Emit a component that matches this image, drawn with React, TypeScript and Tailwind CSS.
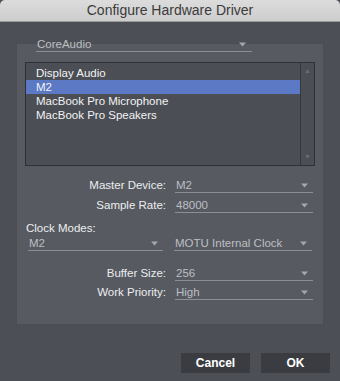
import React from 'react';

const font = { fontFamily: '"Liberation Sans", Arial, sans-serif' };

const Arrow = () => (
  <svg width="7" height="5" viewBox="0 0 7 5" className="shrink-0">
    <path d="M0 0.5 L7 0.5 L3.5 4.5 Z" fill="#a3a6ab" />
  </svg>
);

type SelectProps = { value: string; className?: string; arrowPad?: string };

const Select = ({ value, className = '', arrowPad = 'pr-[5px]' }: SelectProps) => (
  <div
    className={`flex h-[15px] items-center justify-between border-b border-[#8b8e93] ${arrowPad} ${className}`}
  >
    <span className="pl-[1px] text-[11.5px] leading-[14px] text-[#bcbfc3]">{value}</span>
    <Arrow />
  </div>
);

const Field = ({ label, value, className = '' }: { label: string; value: string; className?: string }) => (
  <div className={`flex items-end ${className}`}>
    <span className="w-[150px] pb-[1px] pr-[1px] text-right text-[11.5px] leading-[14px] text-[#eceef0]">
      {label}
    </span>
    <Select value={value} className="ml-[8px] w-[138px]" />
  </div>
);

const devices = ['Display Audio', 'M2', 'MacBook Pro Microphone', 'MacBook Pro Speakers'];

export default function App() {
  return (
    <div className="h-[381px] w-[340px] overflow-hidden bg-[#4c4f55]" style={font}>
      <div className="flex h-[22px] items-center justify-center rounded-t-[5px] border-b border-[#9a9a9a] bg-gradient-to-b from-[#dcdcdc] to-[#cdcdcd]">
        <span className="text-[14px] text-[#3b3b3b]">Configure Hardware Driver</span>
      </div>

      <div className="px-[16px] pt-[21px]">
        <div className="w-[308px] border border-[#4a4d52] bg-[#575a60] pb-[24px]">
          <Select value="CoreAudio" className="-mt-[7px] ml-[19px] w-[216px]" arrowPad="pr-[6px]" />

          <div className="ml-[8px] mt-[10px] flex h-[104px] w-[290px] border border-[#2f3136] bg-[#4b4e54]">
            <div className="flex-1 pt-[3px]">
              {devices.map((d) => (
                <div
                  key={d}
                  className={`h-[14px] pl-[10px] text-[11.5px] leading-[15px] text-[#f2f3f5] ${
                    d === 'M2' ? 'bg-[#5b79c4]' : ''
                  }`}
                >
                  {d}
                </div>
              ))}
            </div>
            <div className="flex w-[14px] flex-col items-center justify-between border-l border-[#35373c] py-[4px]">
              <span className="text-[7px] leading-[8px] text-[#6a6d72]">▲</span>
              <span className="text-[7px] leading-[8px] text-[#6a6d72]">▼</span>
            </div>
          </div>

          <Field label="Master Device:" value="M2" className="mt-[12px]" />
          <Field label="Sample Rate:" value="48000" className="mt-[5px]" />

          <div className="ml-[9px] mt-[8px] text-[11.5px] leading-[14px] text-[#eceef0]">Clock Modes:</div>
          <div className="mt-[1px] flex">
            <Select value="M2" className="ml-[11px] w-[135px]" arrowPad="pr-[5px]" />
            <Select value="MOTU Internal Clock" className="ml-[11px] w-[138px]" />
          </div>

          <Field label="Buffer Size:" value="256" className="mt-[15px]" />
          <Field label="Work Priority:" value="High" className="mt-[4px]" />
        </div>
      </div>

      <div className="mt-[28px] flex justify-end gap-[11px] pr-[10px]">
        <button className="h-[20px] w-[69px] bg-[#3a3c41] text-[12px] font-bold text-white">Cancel</button>
        <button className="h-[20px] w-[69px] bg-[#3a3c41] text-[12px] font-bold text-white">OK</button>
      </div>
    </div>
  );
}
